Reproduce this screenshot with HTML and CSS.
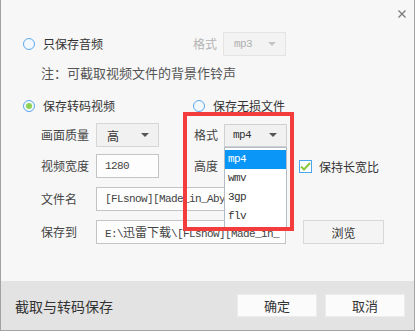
FILE: index.html
```html
<!DOCTYPE html>
<html lang="zh-CN">
  <head>
    <meta charset="UTF-8" />
    <meta name="viewport" content="width=device-width, initial-scale=1.0" />
    <title>截取与转码保存</title>
    <link rel="stylesheet" href="styles.css">
  </head>
  <body>
    <div class="dialog">
      <div class="titlebar">
        <span class="close">
          <svg width="8" height="8" viewBox="0 0 8 8">
            <path d="M0.5 0.5 L7.5 7.5 M7.5 0.5 L0.5 7.5" stroke="#7a7a7a" stroke-width="1.3" fill="none" />
          </svg>
        </span>
      </div>

      <div class="body">
        <div class="row">
          <label class="radio"><span class="dot"></span>只保存音频</label>
          <span class="label label-off">格式</span>
          <div class="select select-off"><span class="mono">mp3</span><i class="caret"></i></div>
        </div>

        <p class="note">注：可截取视频文件的背景作铃声</p>

        <div class="row row-mode">
          <label class="radio checked"><span class="dot"></span>保存转码视频</label>
          <label class="radio"><span class="dot"></span>保存无损文件</label>
        </div>

        <div class="form">
          <div class="field-row">
            <span class="field-label">画面质量</span>
            <div class="select"><span>高</span><i class="caret"></i></div>
            <span class="label">格式</span>
            <div class="select select-open">
              <span class="mono">mp4</span><i class="caret"></i>
              <ul class="menu">
                <li class="active">mp4</li>
                <li>wmv</li>
                <li>3gp</li>
                <li>flv</li>
              </ul>
            </div>
          </div>

          <div class="field-row">
            <span class="field-label">视频宽度</span>
            <div class="input input-small mono">1280</div>
            <span class="label">高度</span>
            <div class="input input-small mono"></div>
            <label class="check">
              <span class="box">
                <svg width="11" height="9" viewBox="0 0 11 9">
                  <path d="M1 4.5 L4 7.5 L10 1" stroke="#8cc63f" stroke-width="2" fill="none" />
                </svg>
              </span>
              保持长宽比
            </label>
          </div>

          <div class="field-row">
            <span class="field-label">文件名</span>
            <div class="input input-wide mono">[FLsnow][Made_in_Aby</div>
          </div>

          <div class="field-row">
            <span class="field-label">保存到</span>
            <div class="input input-wide mono">E:\<span class="cjk">迅雷下载</span>\[FLsnow][Made_in_</div>
            <button class="browse">浏览</button>
          </div>
        </div>
      </div>

      <div class="footer">
        <span class="footer-title">截取与转码保存</span>
        <div class="actions">
          <button class="btn">确定</button>
          <button class="btn">取消</button>
        </div>
      </div>

      <div class="highlight"></div>
    </div>
  </body>
</html>
```

FILE: styles.css
```css
body {
  margin: 0;
  font-family: "Noto Sans CJK SC", sans-serif;
  font-size: 12px;
  color: #444;
  background-color: #fff;
}
.dialog {
  position: relative;
  width: 415px;
  height: 331px;
  box-sizing: border-box;
  border: 1px solid #a2a2a2;
  border-top: none;
  background-color: #f7f7f7;
  display: flex;
  flex-direction: column;
}
.titlebar {
  height: 32px;
  box-sizing: border-box;
  padding: 10px 8px 0 0;
  display: flex;
  justify-content: flex-end;
}
.close {
  display: block;
  width: 8px;
  height: 8px;
}
.close svg {
  display: block;
}
.body {
  flex: 1;
}
.mono {
  font-family: "Liberation Mono", "Noto Sans CJK SC", monospace;
  font-size: 11px;
  letter-spacing: -0.6px;
}
.cjk {
  font-family: "Noto Sans CJK SC", sans-serif;
  font-size: 12px;
  letter-spacing: 0;
}

/* radio rows */
.row {
  height: 24px;
  padding-left: 22px;
  display: flex;
  align-items: center;
}
.row-mode {
  height: 20px;
  margin-top: 14px;
}
.radio {
  width: 170px;
  display: flex;
  align-items: center;
  color: #333;
  line-height: 20px;
}
.dot {
  width: 12px;
  height: 12px;
  box-sizing: border-box;
  border: 1px solid #5ba8ee;
  border-radius: 50%;
  background-color: #f3f8fd;
  margin-right: 8px;
  display: flex;
  align-items: center;
  justify-content: center;
}
.radio.checked .dot::after {
  content: "";
  width: 6px;
  height: 6px;
  border-radius: 50%;
  background-color: #8ed152;
}
.note {
  margin: 8px 0 0;
  padding-left: 40px;
  height: 18px;
  line-height: 18px;
  font-size: 13px;
  color: #555;
}

/* labels and controls */
.label {
  width: 30px;
  line-height: 24px;
}
.label-off {
  color: #b4b4b4;
}
.field-label {
  width: 55px;
  line-height: 24px;
}
.select {
  position: relative;
  width: 63px;
  height: 24px;
  box-sizing: border-box;
  border: 1px solid #d6d6d6;
  background-color: #f1f1f1;
  padding: 0 9px 0 10px;
  display: flex;
  align-items: center;
  justify-content: space-between;
  color: #333;
}
.select-off {
  border-color: #e4e4e4;
  background-color: #f3f3f3;
  color: #b0b0b0;
}
.select-open {
  height: 23px;
  padding-left: 8px;
  border-color: #d0d0d0;
}
.caret {
  width: 0;
  height: 0;
  border-left: 4px solid transparent;
  border-right: 4px solid transparent;
  border-top: 4px solid #555;
}
.select-off .caret {
  border-top-color: #c4c4c4;
}
.menu {
  position: absolute;
  top: 22px;
  left: -1px;
  width: 63px;
  box-sizing: border-box;
  margin: 0;
  padding: 2px 0;
  list-style: none;
  background-color: #fff;
  border: 1px solid #b3bcc6;
  z-index: 2;
  font-family: "Liberation Mono", monospace;
  font-size: 11px;
  letter-spacing: -0.6px;
  color: #333;
}
.menu li {
  height: 19px;
  line-height: 19px;
  padding-left: 3px;
}
.menu li.active {
  background-color: #0996f6;
  color: #fff;
}

/* form grid */
.form {
  margin-top: 7px;
  padding-left: 40px;
}
.field-row {
  height: 24px;
  display: flex;
  align-items: center;
}
.field-row + .field-row {
  margin-top: 9px;
}
.field-row:nth-child(2) {
  margin-top: 7px;
}
.field-row > .label {
  margin-left: 35px;
}
.input {
  height: 24px;
  box-sizing: border-box;
  border: 1px solid #c4c4c4;
  background-color: #fdfdfd;
  padding-left: 8px;
  line-height: 22px;
  color: #444;
  white-space: nowrap;
  overflow: hidden;
}
.input-small {
  width: 63px;
}
.input-wide {
  width: 190px;
}
.check {
  margin-left: 12px;
  display: flex;
  align-items: center;
  color: #333;
}
.box {
  width: 13px;
  height: 13px;
  box-sizing: border-box;
  border: 1px solid #4aa6ee;
  background-color: #fff;
  margin-right: 7px;
  display: flex;
  align-items: center;
  justify-content: center;
}
.box svg {
  display: block;
}
button {
  font-family: "Noto Sans CJK SC", sans-serif;
  font-size: 12px;
  color: #333;
  cursor: pointer;
}
.browse {
  margin-left: 17px;
  width: 81px;
  height: 24px;
  border: 1px solid #d8d8d8;
  background-color: #f4f4f4;
  padding: 0;
}

/* footer */
.footer {
  height: 49px;
  background-color: #e3e3e3;
  display: flex;
  align-items: center;
  padding: 0 9px 0 14px;
}
.footer-title {
  font-size: 14px;
  color: #333;
}
.actions {
  margin-left: auto;
  display: flex;
  gap: 8px;
}
.btn {
  width: 80px;
  height: 23px;
  border: 1px solid #ececec;
  background-color: #fbfbfb;
  padding: 0;
  font-size: 13px;
}

/* annotation box drawn over the dialog */
.highlight {
  position: absolute;
  left: 182px;
  top: 112px;
  width: 111px;
  height: 119px;
  box-sizing: border-box;
  border: 4px solid #f33c3c;
  z-index: 3;
}
```
